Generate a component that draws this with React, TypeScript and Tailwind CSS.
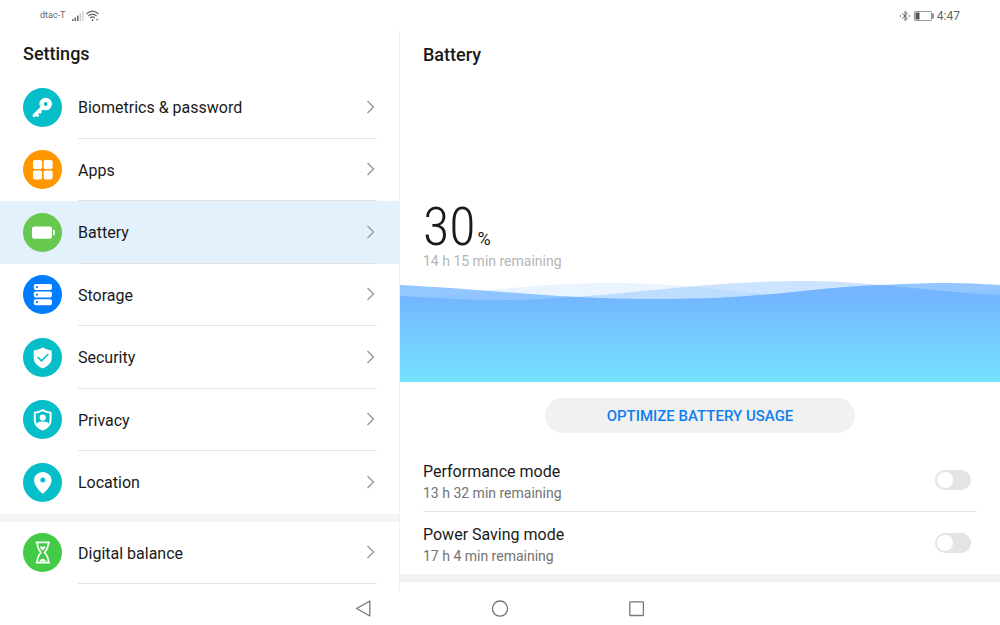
import { useState, type ReactNode } from "react";
import clsx from "clsx";

type MenuItem = {
  id: string;
  label: string;
  color: string;
  icon: ReactNode;
};

const mainItems: MenuItem[] = [
  { id: "biometrics", label: "Biometrics & password", color: "bg-[#05bec8]", icon: <KeyIcon /> },
  { id: "apps", label: "Apps", color: "bg-[#ff9800]", icon: <AppsIcon /> },
  { id: "battery", label: "Battery", color: "bg-[#67c850]", icon: <BatteryIcon /> },
  { id: "storage", label: "Storage", color: "bg-[#007dff]", icon: <StorageIcon /> },
  { id: "security", label: "Security", color: "bg-[#05bec8]", icon: <SecurityIcon /> },
  { id: "privacy", label: "Privacy", color: "bg-[#05bec8]", icon: <PrivacyIcon /> },
  { id: "location", label: "Location", color: "bg-[#05bec8]", icon: <LocationIcon /> },
];

const digitalBalance: MenuItem = {
  id: "digital-balance",
  label: "Digital balance",
  color: "bg-[#43cb46]",
  icon: <HourglassIcon />,
};

export default function App() {
  const [selected, setSelected] = useState("battery");
  const [performance, setPerformance] = useState(false);
  const [powerSaving, setPowerSaving] = useState(false);

  return (
    <div className="flex min-h-screen flex-col bg-white font-[Roboto,sans-serif] text-[#1a1a1a]">
      <StatusBar />

      <div className="flex flex-1">
        <nav className="flex w-2/5 flex-col border-r border-[#f0f0f0] pb-[7px]">
          <h1 className="h-[45px] pt-[9px] pl-[23px] text-lg font-medium">Settings</h1>
          {mainItems.map((item, i) => (
            <MenuRow
              key={item.id}
              item={item}
              active={item.id === selected}
              divider={i < mainItems.length - 1}
              onSelect={setSelected}
            />
          ))}
          <div className="h-2 bg-[#f4f4f4]" />
          <MenuRow
            item={digitalBalance}
            active={selected === digitalBalance.id}
            divider
            onSelect={setSelected}
          />
        </nav>

        <main className="flex flex-1 flex-col pb-[9px]">
          <h2 className="px-[23px] pt-[10px] text-lg font-medium">Battery</h2>

          <div className="mt-auto px-[23px]">
            <p className="flex items-baseline gap-[2px] leading-[48px]">
              <span className="font-['Roboto_Condensed_Light','Roboto_Condensed','Liberation_Sans_Narrow',Roboto,sans-serif] text-[54px] font-light">
                30
              </span>
              <span className="text-lg leading-none">%</span>
            </p>
            <p className="text-sm text-[#b5b5b5]">14 h 15 min remaining</p>
          </div>

          <Waves />

          <button className="mx-auto mt-4 mb-4 h-[35px] w-[310px] rounded-full bg-[#f1f1f1] pt-[2px] text-[15px] font-medium text-[#0f7fee]">
            OPTIMIZE BATTERY USAGE
          </button>

          <ModeRow
            id="performance"
            title="Performance mode"
            remaining="13 h 32 min remaining"
            checked={performance}
            onChange={setPerformance}
            divider
          />
          <ModeRow
            id="power-saving"
            title="Power Saving mode"
            remaining="17 h 4 min remaining"
            checked={powerSaving}
            onChange={setPowerSaving}
          />
          <div className="h-2 bg-[#f2f2f2]" />
        </main>
      </div>

      <SystemNav />
    </div>
  );
}

function StatusBar() {
  return (
    <header className="flex h-[31px] items-center justify-between px-10 text-[#666]">
      <div className="flex items-center">
        <span className="text-[9px]">dtac-T</span>
        <svg className="ml-[7px] h-3 w-3" viewBox="0 0 12 12" fill="currentColor">
          <path d="M0 9h1.5v2H0zM2.5 7.5H4V11H2.5zM5 5.5h1.5V11H5z" />
          <path d="M7.6 3H9v8H7.6zM10.2 1h1.2v10h-1.2z" opacity=".35" />
        </svg>
        <svg className="ml-[2px] h-3 w-[13px]" viewBox="0 0 13 12" fill="none" stroke="currentColor" strokeWidth="1.1">
          <path d="M.5 4Q6.5-1.6 12.5 4M2.4 6Q6.5 2.2 10.6 6M4.2 8Q6.5 5.8 8.8 8" />
          <circle cx="6.5" cy="10" r=".9" fill="currentColor" stroke="none" />
          <path d="M10 9.7h2.4M11.2 8.5v2.4" strokeWidth=".9" opacity=".6" />
        </svg>
      </div>
      <div className="flex items-center">
        <svg className="h-3 w-[10px]" viewBox="0 0 10 12" fill="none" stroke="currentColor" strokeWidth="1">
          <path d="M2.2 3.5 7.4 8.2 5 10.7V1.3l2.4 2.5L2.2 8.5M.5 5.2v1.6M9.4 5.2v1.6" />
        </svg>
        <svg className="ml-1 h-3 w-5" viewBox="0 0 20 12">
          <rect x=".5" y="1.5" width="17" height="9" rx=".6" fill="none" stroke="#999" />
          <path d="M1.5 2.5h4v7h-4z" fill="#555" />
          <path d="M18.2 3.6h1.6v4.8h-1.6z" fill="#777" />
        </svg>
        <span className="ml-[3px] text-xs">4:47</span>
      </div>
    </header>
  );
}

type MenuRowProps = {
  item: MenuItem;
  active: boolean;
  divider: boolean;
  onSelect: (id: string) => void;
};

function MenuRow({ item, active, divider, onSelect }: MenuRowProps) {
  return (
    <a
      href={`#${item.id}`}
      onClick={() => onSelect(item.id)}
      aria-current={active ? "page" : undefined}
      className={clsx("flex flex-1 items-stretch pr-[22px] pl-[23px]", active && "bg-[#e3f1fd]")}
    >
      <span className={clsx("flex size-[39px] shrink-0 self-center rounded-full", item.color)}>
        {item.icon}
      </span>
      <span
        className={clsx(
          "ml-4 flex flex-1 items-center justify-between border-b pr-px",
          divider ? "border-[#e4e4e4]" : "border-transparent"
        )}
      >
        <span className="pt-[3px] text-base">{item.label}</span>
        <svg className="h-[14px] w-[10px]" viewBox="0 0 10 14" fill="none" stroke="#999" strokeWidth="1.4">
          <path d="M1.5 1 7.5 7l-6 6" />
        </svg>
      </span>
    </a>
  );
}

type ModeRowProps = {
  id: string;
  title: string;
  remaining: string;
  checked: boolean;
  divider?: boolean;
  onChange: (value: boolean) => void;
};

function ModeRow({ id, title, remaining, checked, divider, onChange }: ModeRowProps) {
  return (
    <div
      className={clsx(
        "mx-[23px] flex items-center justify-between pr-[6px]",
        divider ? "h-[63px] border-b border-[#e4e4e4]" : "h-[62px]"
      )}
    >
      <label htmlFor={id} className="pt-[3px]">
        <span className="block text-base leading-[22px]">{title}</span>
        <span className="block text-sm text-[#737373]">{remaining}</span>
      </label>
      <input
        id={id}
        type="checkbox"
        role="switch"
        checked={checked}
        onChange={(e) => onChange(e.target.checked)}
        className="h-5 w-9 appearance-none rounded-full bg-[#e4e4e4] p-[2px] before:block before:size-4 before:rounded-full before:bg-white checked:bg-[#007dff] checked:before:ml-auto"
      />
    </div>
  );
}

function Waves() {
  const front = "M0 5C60 8 110 13 160 16S230 19 270 19C360 19 410 8 480 5S560 3 600 5V102H0Z";
  const middle = "M0 16C40 18 75 21 115 20C220 17 300 1 400 1C475 1 530 12 600 15V102H0Z";
  const back = "M0 18C70 14 130 3 210 3C310 3 350 18 450 18C510 18 550 12 600 9V102H0Z";

  return (
    <svg className="mt-[9px] block h-[102px] w-full" viewBox="0 0 600 102" preserveAspectRatio="none">
      <defs>
        <linearGradient id="water" x1="0" y1="0" x2="0" y2="102" gradientUnits="userSpaceOnUse">
          <stop offset=".15" stopColor="#6fb3ff" />
          <stop offset="1" stopColor="#72e2ff" />
        </linearGradient>
        <clipPath id="front">
          <path d={front} />
        </clipPath>
      </defs>
      <path d={back} fill="url(#water)" opacity=".15" />
      <path d={middle} fill="url(#water)" opacity=".36" />
      <path d={front} fill="url(#water)" opacity=".74" />
      <path d={middle} fill="url(#water)" opacity=".8" clipPath="url(#front)" />
    </svg>
  );
}

function SystemNav() {
  return (
    <footer className="flex h-[34px] items-center justify-center gap-[116px] text-[#777]">
      <button aria-label="Back" className="size-5">
        <svg viewBox="0 0 20 20" fill="none" stroke="currentColor" strokeWidth="1.3" strokeLinejoin="round">
          <path d="M15.8 3v15L2.6 10.5z" />
        </svg>
      </button>
      <button aria-label="Home" className="size-5">
        <svg viewBox="0 0 20 20" fill="none" stroke="currentColor" strokeWidth="1.3">
          <circle cx="10" cy="10.6" r="7.6" />
        </svg>
      </button>
      <button aria-label="Recent apps" className="size-5">
        <svg viewBox="0 0 20 20" fill="none" stroke="currentColor" strokeWidth="1.3">
          <rect x="3.8" y="3.9" width="13.6" height="13.6" rx=".6" />
        </svg>
      </button>
    </footer>
  );
}

function KeyIcon() {
  return (
    <svg viewBox="0 0 39 39" fill="none" stroke="#fff">
      <circle cx="22.7" cy="16" r="4.1" strokeWidth="4.4" />
      <path d="m19.6 19.2-8.3 8.3" strokeWidth="3.4" strokeLinecap="round" />
      <path d="m13.2 26 2.3 2.3M16.4 23.2l1.8 1.8" strokeWidth="2.6" />
    </svg>
  );
}

function AppsIcon() {
  return (
    <svg viewBox="0 0 39 39" fill="#fff">
      <rect x="10" y="10" width="9" height="9" rx="1.8" />
      <rect x="20.6" y="10" width="9" height="9" rx="1.8" />
      <rect x="10" y="20.4" width="9" height="9" rx="1.8" />
      <rect x="20.6" y="20.4" width="9" height="9" rx="1.8" />
    </svg>
  );
}

function BatteryIcon() {
  return (
    <svg viewBox="0 0 39 39" fill="#fff">
      <rect x="9" y="13.4" width="20" height="12.4" rx="2.2" />
      <path d="M30 16.6c1.4.3 2 1.2 2 3s-.6 2.7-2 3z" />
    </svg>
  );
}

function StorageIcon() {
  return (
    <svg viewBox="0 0 39 39" fill="#fff">
      <rect x="10.8" y="9" width="18.2" height="6" rx="2" />
      <rect x="10.8" y="16.6" width="18.2" height="6" rx="2" />
      <rect x="10.8" y="24.2" width="18.2" height="6" rx="2" />
      <g fill="#007dff">
        <circle cx="14" cy="12" r="1.1" />
        <circle cx="14" cy="19.6" r="1.1" />
        <circle cx="14" cy="27.2" r="1.1" />
      </g>
    </svg>
  );
}

function SecurityIcon() {
  return (
    <svg viewBox="0 0 39 39">
      <path
        d="M19.7 9.2c2.6 1.7 5.6 2.8 8 3 .7.1 1 .5 1 1.1v6.500c0 5.200-3.600 8.200-9 10.700-5.400-2.500-9-5.500-9-10.700v-6.500c0-.6.3-1 1-1.100 2.400-.2 5.400-1.300 8-3z"
        fill="#fff"
      />
      <path d="m14.600 19 3.900 3.900 6.900-6.900" fill="none" stroke="#05bec8" strokeWidth="1.600" />
    </svg>
  );
}

function PrivacyIcon() {
  return (
    <svg viewBox="0 0 39 39">
      <path
        d="M19.7 10.2c2.4 1.4 5 2.3 7.9 2.6V20c0 4.8-3.2 7.6-7.9 9.6-4.7-2-7.9-4.8-7.9-9.6v-7.2c2.9-.3 5.5-1.2 7.9-2.6z"
        fill="none"
        stroke="#fff"
        strokeWidth="2"
        strokeLinejoin="round"
      />
      <circle cx="19.7" cy="17.6" r="3.1" fill="#fff" />
      <path d="M13.3 24c1.2-1.6 3.5-2.4 6.4-2.4s5.200.8 6.400 2.400c-1.100 2.400-3.200 4-6.400 5.400-3.200-1.400-5.300-3-6.400-5.400z" fill="#fff" />
    </svg>
  );
}

function LocationIcon() {
  return (
    <svg viewBox="0 0 39 39">
      <path
        d="M19.8 9c4.8 0 8.7 3.6 8.7 8.3s-4 9.3-7.6 12.7c-.7.7-1.5.7-2.2 0-3.6-3.4-7.6-8-7.6-12.7S15 9 19.8 9z"
        fill="#fff"
      />
      <circle cx="19.8" cy="17" r="2.5" fill="#05bec8" />
    </svg>
  );
}

function HourglassIcon() {
  return (
    <svg viewBox="0 0 39 39" fill="none" stroke="#fff" strokeWidth="1.7" strokeLinejoin="round" strokeLinecap="round">
      <path d="M13.4 9.4h12.8M13.4 29.7h12.8" />
      <path d="M14.2 9.6c0 5 1 6.9 3.8 9.9-2.8 3-3.8 5-3.8 10M25.4 9.6c0 5-1 6.9-3.8 9.9 2.8 3 3.8 5 3.8 10" />
      <path
        d="M17.2 13.7c1-.9 1.9-.5 2.6.2.7-.7 1.6-1.1 2.6-.2.6 1-.9 2.4-2.6 3.5-1.7-1.1-3.2-2.5-2.6-3.5zM16.4 28.5c.6-1.8 1.9-2.8 3.4-2.8s2.8 1 3.4 2.8z"
        fill="#fff"
        stroke="none"
      />
    </svg>
  );
}
